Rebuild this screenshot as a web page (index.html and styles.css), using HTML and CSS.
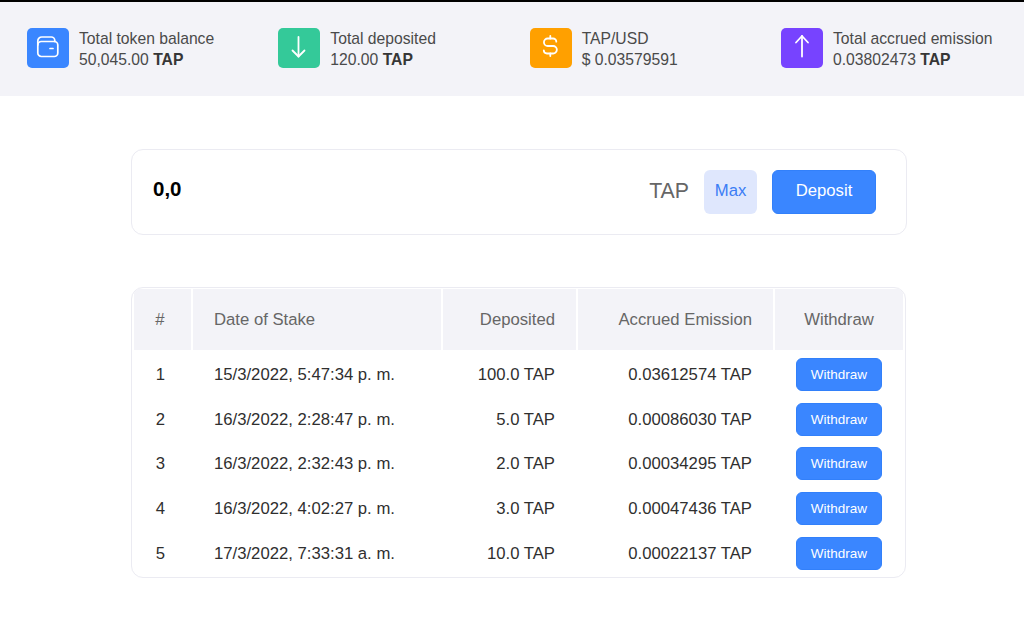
FILE: index.html
```html
<!DOCTYPE html>
<html lang="en">
<head>
    <meta charset="UTF-8">
    <meta name="viewport" content="width=device-width, initial-scale=1.0">
    <title>TAP Staking</title>
    <link rel="stylesheet" href="styles.css">
</head>
<body>

    <!-- Stats bar -->
    <div class="stats-bar">
        <div class="stat">
            <div class="stat-icon blue">
                <svg width="24" height="24" viewBox="0 0 24 24" fill="none" stroke="#fff" stroke-width="1.7" stroke-linecap="round" stroke-linejoin="round">
                    <rect x="1.8" y="5.5" width="20" height="15" rx="3.5"/>
                    <path d="M1.8 9V5a4 4 0 0 1 4-4h9.5a3.5 3.5 0 0 1 3.5 3.5v1"/>
                    <path d="M14 12.5h3"/>
                </svg>
            </div>
            <div class="stat-text">
                <div>Total token balance</div>
                <div>50,045.00 <b>TAP</b></div>
            </div>
        </div>
        <div class="stat">
            <div class="stat-icon green">
                <svg width="24" height="24" viewBox="0 0 24 24" fill="none" stroke="#fff" stroke-width="1.8" stroke-linecap="round" stroke-linejoin="round">
                    <path d="M11.5 1v19.5"/>
                    <path d="M5.5 14.5l6 6 6-6"/>
                </svg>
            </div>
            <div class="stat-text">
                <div>Total deposited</div>
                <div>120.00 <b>TAP</b></div>
            </div>
        </div>
        <div class="stat">
            <div class="stat-icon orange">
                <svg width="24" height="24" viewBox="0 0 24 24" fill="none" stroke="#fff" stroke-width="1.8" stroke-linecap="round" stroke-linejoin="round">
                    <path d="M11.3 0v2.5"/>
                    <path d="M11.3 17.5V20"/>
                    <path d="M17.3 5.7a3.2 3.2 0 0 0-3.2-3.2H8.7a3.75 3.75 0 0 0 0 7.5h5.4a3.75 3.75 0 0 1 0 7.5H8a3.2 3.2 0 0 1-3.2-3.2"/>
                </svg>
            </div>
            <div class="stat-text">
                <div>TAP/USD</div>
                <div>$ 0.03579591</div>
            </div>
        </div>
        <div class="stat">
            <div class="stat-icon purple">
                <svg width="24" height="24" viewBox="0 0 24 24" fill="none" stroke="#fff" stroke-width="1.8" stroke-linecap="round" stroke-linejoin="round">
                    <path d="M12 20.5V0"/>
                    <path d="M6 6.5L12 0l6 6.5"/>
                </svg>
            </div>
            <div class="stat-text">
                <div>Total accrued emission</div>
                <div>0.03802473 <b>TAP</b></div>
            </div>
        </div>
    </div>

    <div class="content">
        <!-- Deposit form -->
        <div class="deposit-card">
            <div class="amount">0,0</div>
            <div class="deposit-unit">TAP</div>
            <button class="max-btn">Max</button>
            <button class="deposit-btn">Deposit</button>
        </div>

        <!-- Stakes table -->
        <div class="table-card">
            <table class="stakes">
                <thead>
                    <tr>
                        <th class="col-num">#</th>
                        <th class="col-date">Date of Stake</th>
                        <th class="col-dep">Deposited</th>
                        <th class="col-acc">Accrued Emission</th>
                        <th class="col-act">Withdraw</th>
                    </tr>
                </thead>
                <tbody>
                    <tr>
                        <td class="col-num">1</td>
                        <td class="col-date">15/3/2022, 5:47:34 p. m.</td>
                        <td class="col-dep">100.0 TAP</td>
                        <td class="col-acc">0.03612574 TAP</td>
                        <td class="col-act"><button class="withdraw-btn">Withdraw</button></td>
                    </tr>
                    <tr>
                        <td class="col-num">2</td>
                        <td class="col-date">16/3/2022, 2:28:47 p. m.</td>
                        <td class="col-dep">5.0 TAP</td>
                        <td class="col-acc">0.00086030 TAP</td>
                        <td class="col-act"><button class="withdraw-btn">Withdraw</button></td>
                    </tr>
                    <tr>
                        <td class="col-num">3</td>
                        <td class="col-date">16/3/2022, 2:32:43 p. m.</td>
                        <td class="col-dep">2.0 TAP</td>
                        <td class="col-acc">0.00034295 TAP</td>
                        <td class="col-act"><button class="withdraw-btn">Withdraw</button></td>
                    </tr>
                    <tr>
                        <td class="col-num">4</td>
                        <td class="col-date">16/3/2022, 4:02:27 p. m.</td>
                        <td class="col-dep">3.0 TAP</td>
                        <td class="col-acc">0.00047436 TAP</td>
                        <td class="col-act"><button class="withdraw-btn">Withdraw</button></td>
                    </tr>
                    <tr>
                        <td class="col-num">5</td>
                        <td class="col-date">17/3/2022, 7:33:31 a. m.</td>
                        <td class="col-dep">10.0 TAP</td>
                        <td class="col-acc">0.00022137 TAP</td>
                        <td class="col-act"><button class="withdraw-btn">Withdraw</button></td>
                    </tr>
                </tbody>
            </table>
        </div>
    </div>

</body>
</html>
```

FILE: styles.css
```css
body {
    margin: 0;
    padding: 0;
    font-family: "Liberation Sans", Arial, sans-serif;
    background-color: #fff;
    color: #363636;
    height: 627px;
    overflow: hidden;
}
button {
    font-family: inherit;
    cursor: pointer;
}
/* Stats bar */
.stats-bar {
    display: grid;
    grid-template-columns: repeat(4, 251.33px);
    height: 94px;
    padding-left: 27px;
    align-items: center;
    border-top: 2px solid #000;
    background-color: #f3f3f8;
}
.stat {
    display: flex;
    align-items: center;
    gap: 10px;
}
.stat-icon {
    width: 42px;
    height: 40px;
    align-self: flex-start;
    border-radius: 5px;
    display: flex;
    justify-content: center;
    align-items: center;
}
.stat-icon svg {
    overflow: visible;
}
.stat-icon.blue {
    background-color: #3a86ff;
}
.stat-icon.green {
    background-color: #34c999;
}
.stat-icon.orange {
    background-color: #ffa000;
}
.stat-icon.purple {
    background-color: #7743ff;
}
.stat-text {
    font-size: 15.7px;
    line-height: 21px;
    color: #4a4a4a;
}
.stat-text b {
    color: #363636;
}
/* Main content */
.content {
    width: 776px;
    margin-left: 131px;
    padding-top: 53px;
}
.deposit-card {
    display: flex;
    align-items: center;
    box-sizing: border-box;
    height: 86px;
    padding: 0 30px 0 21px;
    border: 1px solid #ebebf2;
    border-radius: 12px;
}
.amount {
    flex: 1;
    font-size: 20.5px;
    font-weight: bold;
    color: #000;
    margin-top: -6px;
}
.deposit-unit {
    font-size: 21.3px;
    color: #666;
    margin-right: 15px;
    margin-top: -2px;
}
.max-btn {
    width: 53px;
    height: 44px;
    margin-right: 15px;
    padding: 0 0 2px;
    font-size: 16.7px;
    color: #3b7df5;
    background-color: #dfe7fd;
    border: none;
    border-radius: 6px;
}
.deposit-btn {
    width: 104px;
    height: 44px;
    padding: 0 0 2px;
    font-size: 16.7px;
    color: #fff;
    background-color: #3a86ff;
    border: 1px solid #3280fa;
    border-radius: 6px;
}
.table-card {
    width: 775px;
    box-sizing: border-box;
    height: 291px;
    margin-top: 52px;
    padding: 1px 2px 0;
    border: 1px solid #ebebf2;
    border-radius: 12px;
    overflow: hidden;
}
.stakes {
    width: 769px;
    table-layout: fixed;
    border-collapse: collapse;
    font-size: 16.7px;
}
.stakes th {
    height: 61px;
    padding: 0 21px 0 22px;
    font-weight: normal;
    color: #666;
    background-color: #f3f3f8;
    border-left: 2px solid #fff;
}
.stakes th:first-child {
    border-left: none;
}
.stakes td {
    height: 44.7px;
    padding: 5px 22px 0;
    color: #2f2f2f;
}
.stakes td.col-act {
    padding-top: 4px;
}
.col-num {
    width: 58px;
    text-align: center;
    box-sizing: border-box;
}
.stakes .col-num {
    padding-left: 0;
    padding-right: 5px;
}
.col-date {
    width: 250px;
    text-align: left;
    box-sizing: border-box;
}
.stakes th.col-date {
    padding-left: 21px;
}
.col-dep {
    width: 135px;
    text-align: right;
    box-sizing: border-box;
}
.col-acc {
    width: 197px;
    text-align: right;
    box-sizing: border-box;
}
.col-act {
    text-align: center;
    box-sizing: border-box;
}
.stakes th.col-act {
    padding: 0 22px;
}
.withdraw-btn {
    display: block;
    width: 86px;
    height: 33px;
    margin: 0 auto;
    padding: 0;
    font-size: 13.5px;
    color: #fff;
    background-color: #3a86ff;
    border: 1px solid #3280fa;
    border-radius: 6px;
}
```
